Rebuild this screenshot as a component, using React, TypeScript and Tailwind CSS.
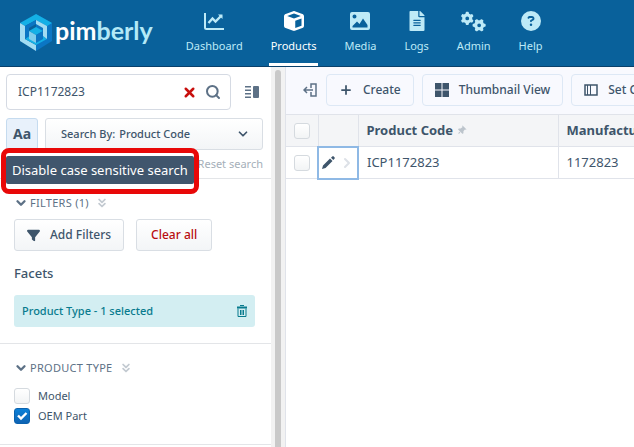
import type { InputHTMLAttributes, ReactNode } from 'react'
import { ChevronDown, ChevronRight, ChevronsDown, Plus, Search, X } from 'lucide-react'
import { FaCircleQuestion, FaCube, FaFilter, FaGears, FaThumbtack } from 'react-icons/fa6'
import { FaFileAlt } from 'react-icons/fa'

interface NavItemProps {
  label: string
  icon: ReactNode
  active?: boolean
}

function Logo() {
  return (
    <a href="#" className="flex items-start gap-[3px] pt-[14px] text-white">
      <svg width="32" height="37" viewBox="0 0 32 37" aria-hidden="true">
        <path d="M16 0 32 9v18L16 37z" fill="#0b76c4" />
        <path d="M16 0 32 9l-5 3-11-6-11 6-5-3z" fill="#14b0e6" />
        <path d="M0 9l5 3v13l11 6v6L0 27z" fill="#a2dcf2" />
        <path d="M5 25l4-3 7 4 7-4 4 3-11 6z" fill="#14b0e6" />
        <path d="M16 6l11 6v13l-4-3v-8l-7-4z" fill="#a2dcf2" />
        <path d="M5 12l11-6v4l-7 4v8l-4 3z" fill="#0b76c4" />
        <path d="M9 17l7-4 7 4-7 4z" fill="#14b0e6" />
        <path d="M9 17l7 4v8l-7-4z" fill="#7fcdec" />
        <path d="M16 21l7-4v8l-7 4z" fill="#0b76c4" />
      </svg>
      <span className="font-['Lato',sans-serif] text-[25px] leading-8 font-bold">
        pim<span className="text-[#b3e9f7]">berly</span>
      </span>
    </a>
  )
}

function NavItem({ label, icon, active }: NavItemProps) {
  return (
    <a
      href="#"
      className={`flex flex-col items-center justify-between border-b-[3px] px-[2px] pt-[10px] text-[11px] leading-4 ${
        active ? 'border-white text-white' : 'border-transparent text-[#bdeaf7]'
      }`}
    >
      <span className="flex h-[22px] items-center">{icon}</span>
      <span className="pb-[9px]">{label}</span>
    </a>
  )
}

const NAV: NavItemProps[] = [
  {
    label: 'Dashboard',
    icon: (
      <svg width="20" height="18" viewBox="0 0 20 18" fill="none" stroke="currentColor" strokeWidth="2">
        <path d="M1 1v14.500q0 1.500 1.500 1.500H20" />
        <path d="M4.500 11l4-4.500L11.500 9.500 17.500 3.500" strokeWidth="2.400" />
        <path d="M14 2.500h4.500V7z" fill="currentColor" stroke="none" />
      </svg>
    ),
  },
  { label: 'Products', icon: <FaCube size={20} />, active: true },
  {
    label: 'Media',
    icon: (
      <svg width="20" height="18" viewBox="0 0 20 18" fill="currentColor" fillRule="evenodd">
        <path d="M2 0h16a2 2 0 0 1 2 2v14a2 2 0 0 1-2 2H2a2 2 0 0 1-2-2V2a2 2 0 0 1 2-2zM4.500 2.500a2 2 0 1 0 0 4 2 2 0 0 0 0-4zM2.500 15.500h15V13L13 6.500 9.500 12 7 9.500l-4.500 4.500z" />
      </svg>
    ),
  },
  { label: 'Logs', icon: <FaFileAlt size={20} /> },
  { label: 'Admin', icon: <FaGears size={25} /> },
  { label: 'Help', icon: <FaCircleQuestion size={20} /> },
]

function Checkbox(props: InputHTMLAttributes<HTMLInputElement>) {
  return (
    <span className="relative flex size-4 shrink-0">
      <input
        type="checkbox"
        className="peer size-4 appearance-none rounded-[3px] border border-[#d5dadf] bg-linear-to-b from-white to-[#f2f4f5] checked:border-[#0b62ae] checked:from-[#0b80d8] checked:to-[#0e63b3]"
        {...props}
      />
      <svg
        viewBox="0 0 16 16"
        className="pointer-events-none absolute inset-0 hidden size-4 peer-checked:block"
        fill="none"
        stroke="white"
        strokeWidth="2.400"
      >
        <path d="M4 7.500l3 3 5.500-5.500" />
      </svg>
    </span>
  )
}

function SectionTitle({ children }: { children: ReactNode }) {
  return (
    <h2 className="flex items-center gap-[2px] text-[11px] leading-4 text-[#5d7186]">
      <ChevronDown size={14} strokeWidth={4} />
      <span className="tracking-wide uppercase">{children}</span>
      <ChevronsDown size={14} strokeWidth={3} className="ml-1 text-[#c3cad1]" />
    </h2>
  )
}

function ToolbarButton({ icon, children }: { icon: ReactNode; children: ReactNode }) {
  return (
    <button
      type="button"
      className="flex h-8 shrink-0 items-center gap-[10px] rounded border border-[#dde8f5] px-3 text-xs font-medium"
    >
      {icon}
      {children}
    </button>
  )
}

function SearchPanel() {
  return (
    <section className="relative border-b border-[#e3e5e8] pt-[7px] pr-2 pb-[6px] pl-[6px]">
      <div className="flex items-center gap-[14px]">
        <div className="flex h-9 min-w-0 flex-1 items-center gap-2 rounded border border-[#d5dae3] pr-[9px] pl-[11px]">
          <input
            aria-label="Search"
            defaultValue="ICP1172823"
            className="min-w-0 flex-1 text-xs outline-none"
          />
          <button type="button" aria-label="Clear">
            <X size={15} strokeWidth={4} className="text-[#c8100e]" />
          </button>
          <button type="button" aria-label="Run search">
            <Search size={16} strokeWidth={3} className="text-[#5d7186]" />
          </button>
        </div>
        <button type="button" aria-label="Layout" className="mr-1 text-[#5d7186]">
          <svg width="14" height="12" viewBox="0 0 14 12" fill="currentColor">
            <path d="M0 0h6v1.500H0zM0 3.500h6V5H0zM0 7h6v1.500H0zM0 10.500h6V12H0z" />
            <rect x="8" width="6" height="12" rx="1" />
          </svg>
        </button>
      </div>

      <div className="mt-2 flex gap-[7px]">
        <button
          type="button"
          className="h-8 w-8 shrink-0 rounded-[3px] border border-[#c5dbef] bg-[#e8f1fb] text-sm font-bold"
        >
          Aa
        </button>
        <label className="relative flex h-8 flex-1 items-center gap-1 rounded-[3px] border border-[#d9dee4] bg-linear-to-b from-white to-[#f3f5f7] pl-[15px] text-[11px] font-medium">
          <span>Search By:</span>
          <select className="min-w-0 flex-1 appearance-none outline-none">
            <option>Product Code</option>
          </select>
          <ChevronDown size={14} strokeWidth={3} className="pointer-events-none absolute right-3" />
        </label>
      </div>

      <div className="mt-[6px] flex justify-end">
        <button type="button" className="text-[11px] leading-4 text-[#a5afb9]">
          Reset search
        </button>
      </div>

      <div
        role="tooltip"
        className="absolute top-[81px] left-[1px] z-10 rounded-lg border-[5px] border-[#e80808] bg-white pt-[3px] pb-[5px]"
      >
        <div className="rounded-[2px] bg-[#40566d] px-[6px] text-[13px] leading-7 whitespace-nowrap text-white">
          Disable case sensitive search
        </div>
      </div>
    </section>
  )
}

function Sidebar() {
  return (
    <aside className="flex w-[285px] shrink-0">
      <div className="min-w-0 flex-1">
        <SearchPanel />

        <section className="border-b border-[#e3e5e8] pt-4 pr-4 pb-4 pl-[14px]">
          <SectionTitle>Filters (1)</SectionTitle>
          <div className="mt-2 flex gap-3 text-xs font-medium">
            <button
              type="button"
              className="flex h-8 items-center gap-[10px] rounded-[3px] border border-[#d9dee4] bg-linear-to-b from-white to-[#f3f5f7] px-3"
            >
              <FaFilter size={13} />
              Add Filters
            </button>
            <button
              type="button"
              className="h-8 rounded-[3px] border border-[#d9dee4] bg-linear-to-b from-white to-[#f3f5f7] px-[14px] text-[#b80d10]"
            >
              Clear all
            </button>
          </div>
          <h3 className="mt-3 text-[13px] leading-5 font-medium">Facets</h3>
          <div className="mt-3 flex h-8 items-center justify-between rounded-[3px] bg-[#d3eef2] px-2 text-[11px] font-medium text-[#087b8e]">
            Product Type - 1 selected
            <button type="button" aria-label="Remove facet">
              <svg width="10" height="12" viewBox="0 0 10 12" fill="none" stroke="currentColor">
                <path d="M3 .5h4M1 3.500v8h8v-8M3.500 5v5M5 5v5M6.500 5v5" />
                <path d="M0 2.500h10" strokeWidth="2" />
              </svg>
            </button>
          </div>
        </section>

        <section className="border-b border-[#e3e5e8] pt-4 pr-4 pb-5 pl-[14px]">
          <SectionTitle>Product Type</SectionTitle>
          <div className="mt-3 flex flex-col gap-1 text-[11px] leading-4">
            <label className="flex items-center gap-2">
              <Checkbox />
              Model
            </label>
            <label className="flex items-center gap-2">
              <Checkbox defaultChecked />
              OEM Part
            </label>
          </div>
        </section>
      </div>

      <div className="w-[14px] shrink-0 bg-[#f2f2f2] px-1 pt-[3px]">
        <div className="h-full rounded-t-full bg-[#c9c9c9]" />
      </div>
    </aside>
  )
}

function Products() {
  return (
    <main className="min-w-0 flex-1 overflow-hidden border-l border-[#e0e3ea]">
      <div className="flex items-center gap-2 bg-[#f8f9fe] pt-[7px] pb-2 pl-4 whitespace-nowrap">
        <button type="button" aria-label="Collapse sidebar" className="shrink-0 px-[1px] text-[#5d7186]">
          <svg width="14" height="14" viewBox="0 0 14 14" fill="none" stroke="currentColor" strokeWidth="1.500">
            <path d="M8 5V1h5v12H8V9M10 7H1M4 4L1 7l3 3" />
          </svg>
        </button>
        <ToolbarButton icon={<Plus size={14} strokeWidth={3} />}>Create</ToolbarButton>
        <ToolbarButton
          icon={
            <svg width="14" height="14" viewBox="0 0 14 14" fill="currentColor">
              <path d="M0 0h6.500v6.500H0zM7.500 0H14v6.500H7.500zM0 7.500h6.500V14H0zM7.500 7.500H14V14H7.500z" />
            </svg>
          }
        >
          Thumbnail View
        </ToolbarButton>
        <ToolbarButton
          icon={
            <svg width="14" height="12" viewBox="0 0 14 12" fill="none" stroke="currentColor">
              <rect x="1" y="1" width="12" height="10" strokeWidth="1.500" />
              <path d="M3.500 1v10M6.500 1v10" />
            </svg>
          }
        >
          Set Columns
        </ToolbarButton>
      </div>

      <table className="w-full table-fixed border-collapse text-[13px]">
        <colgroup>
          <col className="w-8" />
          <col className="w-10" />
          <col className="w-[200px]" />
          <col />
        </colgroup>
        <thead>
          <tr className="h-8 border-y border-[#e0e3ea] bg-[#f4f5f7] text-left">
            <th className="pl-2">
              <Checkbox aria-label="Select all" />
            </th>
            <th className="border-x border-[#e0e3ea]" />
            <th className="border-r border-[#e0e3ea] pl-2">
              <span className="flex items-center gap-1">
                Product Code
                <FaThumbtack size={9} className="rotate-45 text-[#bcc4cc]" />
              </span>
            </th>
            <th className="overflow-hidden pl-2 whitespace-nowrap">Manufacturer</th>
          </tr>
        </thead>
        <tbody>
          <tr className="h-8 border-b border-[#e0e3ea]">
            <td className="pl-2">
              <Checkbox aria-label="Select ICP1172823" />
            </td>
            <td className="border-2 border-[#8fb9e5]">
              <div className="flex items-center justify-center gap-1">
                <button type="button" aria-label="Edit">
                  <svg width="13" height="13" viewBox="0 0 13 13" fill="currentColor">
                    <path d="M0 13l1-3.500 7-7L10.500 5l-7 7zM9 1.700L10.500.3h1L12.700 1.500v1L11.300 4z" />
                  </svg>
                </button>
                <ChevronRight size={16} strokeWidth={3} className="text-[#dde1e7]" />
              </div>
            </td>
            <td className="border-r border-[#e0e3ea] pl-2">ICP1172823</td>
            <td className="pl-2">1172823</td>
          </tr>
        </tbody>
      </table>
    </main>
  )
}

export default function App() {
  return (
    <div className="flex h-screen flex-col overflow-hidden bg-white font-['Noto_Sans','Open_Sans',sans-serif] text-[#3e556b]">
      <header className="flex h-[67px] shrink-0 items-stretch gap-[31px] border-b border-[#08406b] bg-[#09619b] pl-5">
        <Logo />
        <nav className="flex gap-6">
          {NAV.map((item) => (
            <NavItem key={item.label} {...item} />
          ))}
        </nav>
      </header>
      <div className="flex min-h-0 flex-1">
        <Sidebar />
        <Products />
      </div>
    </div>
  )
}
